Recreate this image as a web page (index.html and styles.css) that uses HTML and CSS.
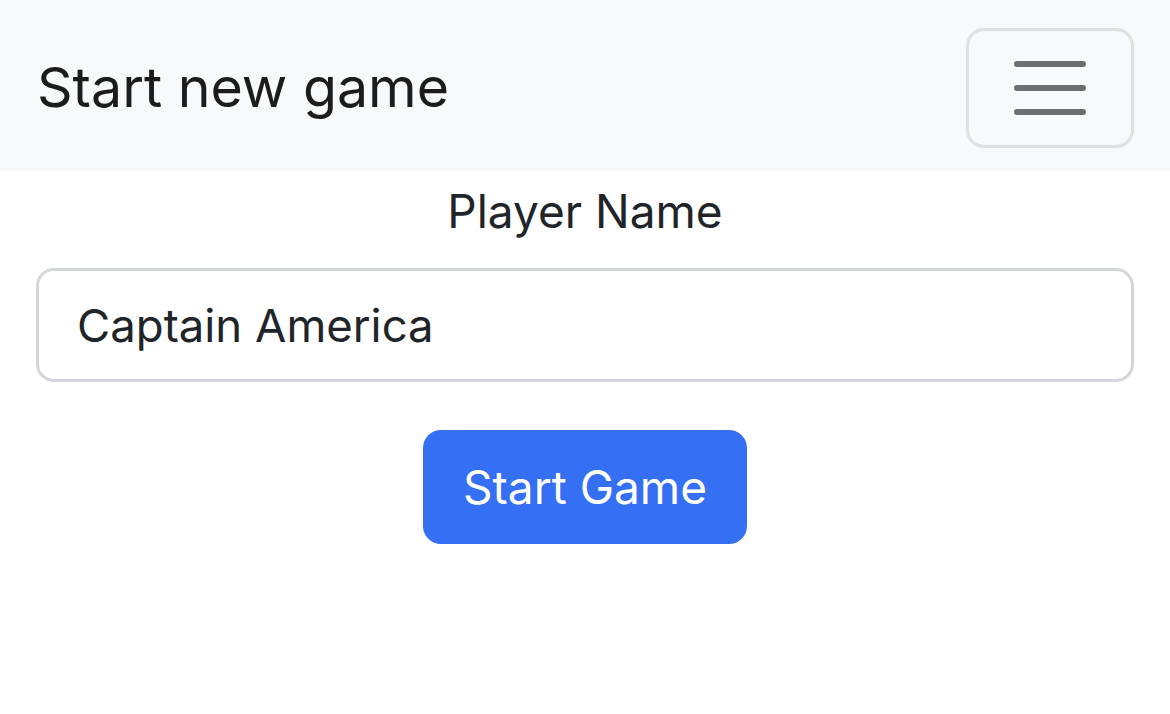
FILE: index.html
```html
<!DOCTYPE html>
<html lang="en">
<head>
<meta charset="utf-8">
<title>Start new game</title>
<link rel="stylesheet" href="styles.css">
</head>
<body>
<nav class="navbar">
  <span class="brand">Start new game</span>
  <button class="toggler" type="button" aria-label="Toggle navigation">
    <svg class="toggler-icon" viewBox="0 0 30 30" width="90" height="90">
      <path stroke="rgba(33,37,41,0.65)" stroke-linecap="round" stroke-miterlimit="10" stroke-width="2" d="M4 7h22M4 15h22M4 23h22"/>
    </svg>
  </button>
</nav>
<main class="content">
  <label class="label" for="player">Player Name</label>
  <input class="input" id="player" type="text" value="Captain America">
  <div class="actions">
    <button class="btn-primary" type="button">Start Game</button>
  </div>
</main>
</body>
</html>
```

FILE: styles.css
```css
* { box-sizing: border-box; }
html, body { margin: 0; padding: 0; }
body {
  font-family: Inter, "Noto Sans", "Liberation Sans", sans-serif;
  color: #212529;
  background: #fff;
  width: 1170px;
  height: 714px;
  overflow: hidden;
}
.navbar {
  display: flex;
  align-items: center;
  justify-content: space-between;
  height: 171px;
  padding: 0 36px 0 37px;
  background: #f8f9fa;
}
.brand {
  font-size: 55.5px;
  line-height: 1;
  color: #1c1c1c;
  padding-top: 2px;
}
.toggler {
  display: flex;
  align-items: center;
  justify-content: center;
  width: 168px;
  height: 120px;
  margin-top: 5px;
  padding: 0;
  background: transparent;
  border: 3px solid #dfe0e1;
  border-radius: 18px;
}
.toggler-icon { display: block; }
.content {
  display: flex;
  flex-direction: column;
  padding: 0 36px;
}
.label {
  display: block;
  text-align: center;
  font-size: 46px;
  line-height: 72px;
  margin-top: 4px;
  margin-bottom: 21px;
  color: #212529;
}
.input {
  display: block;
  width: 100%;
  height: 114px;
  padding: 0 38px;
  font-family: inherit;
  font-size: 45.5px;
  color: #212529;
  background: #fff;
  border: 3px solid #d3d7dc;
  border-radius: 18px;
  outline: none;
}
.actions {
  display: flex;
  justify-content: center;
  margin-top: 48px;
}
.btn-primary {
  width: 324px;
  height: 114px;
  padding: 0;
  font-family: inherit;
  font-size: 46px;
  color: #fff;
  background: #346ff4;
  border: none;
  border-radius: 18px;
}
```
